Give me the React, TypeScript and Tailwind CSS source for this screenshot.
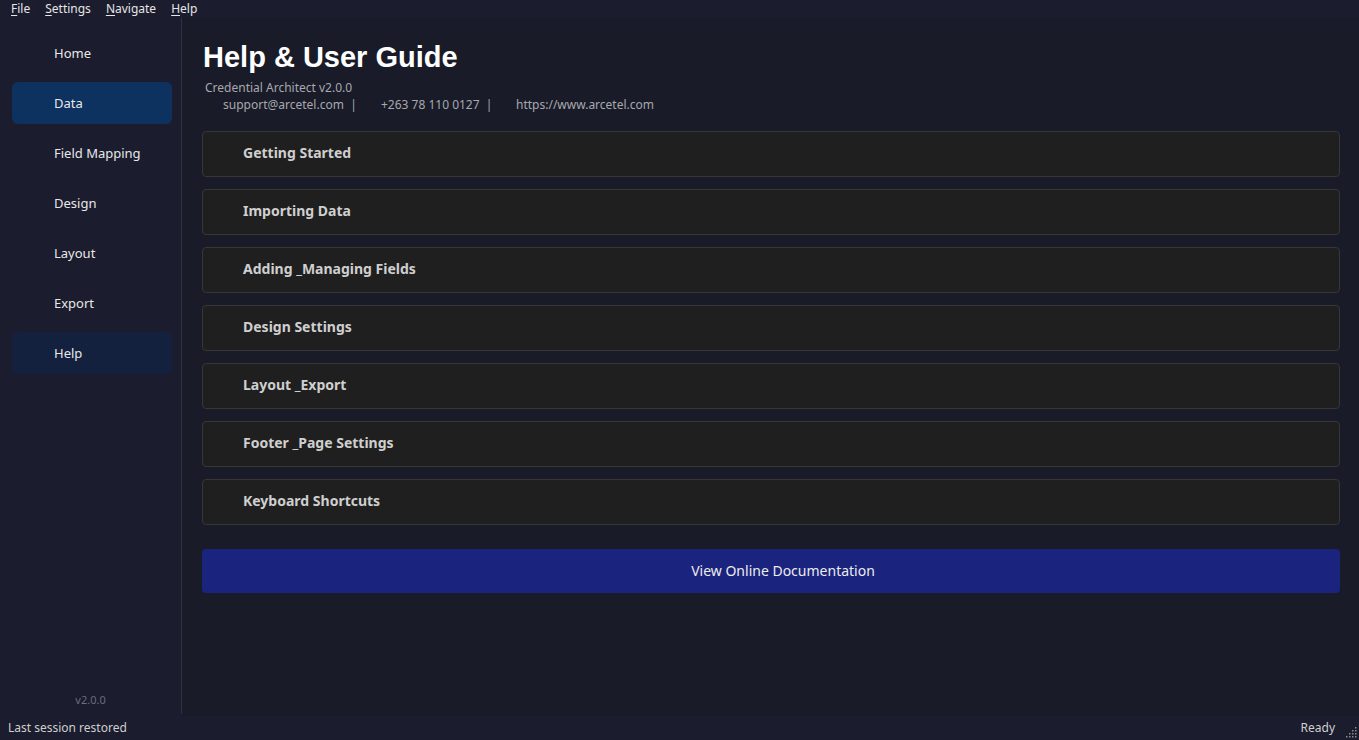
const navItems = ["Home", "Data", "Field Mapping", "Design", "Layout", "Export", "Help"];

const sections = [
  "Getting Started",
  "Importing Data",
  "Adding _Managing Fields",
  "Design Settings",
  "Layout _Export",
  "Footer _Page Settings",
  "Keyboard Shortcuts",
];

const menus = [
  { key: "F", rest: "ile" },
  { key: "S", rest: "ettings" },
  { key: "N", rest: "avigate" },
  { key: "H", rest: "elp" },
];

function App() {
  return (
    <div
      className="w-[1359px] h-[740px] flex flex-col bg-[#1b1c2e] text-[#e0e0e0] overflow-hidden"
      style={{ fontFamily: '"Noto Sans", sans-serif' }}
    >
      {/* menu bar */}
      <div className="h-[18px] flex items-center gap-[15px] pl-[11px] text-[12px] leading-none text-[#e6e6e6]">
        {menus.map((m) => (
          <span key={m.key}>
            <span className="underline underline-offset-2">{m.key}</span>
            {m.rest}
          </span>
        ))}
      </div>

      <div className="flex flex-1 min-h-0">
        {/* sidebar */}
        <aside className="w-[182px] flex flex-col pt-[14px] pb-[6px] border-r border-[#2e3142] mb-[2px]">
          <nav className="flex flex-col gap-[8px] px-[12px]">
            {navItems.map((item) => (
              <div
                key={item}
                className={
                  "h-[42px] w-[160px] rounded-[6px] flex items-center pl-[42px] pt-[1px] text-[13px] text-[#e8e8e8] " +
                  (item === "Data"
                    ? "bg-[#0e3260]"
                    : item === "Help"
                    ? "bg-[#13213f]"
                    : "")
                }
              >
                {item}
              </div>
            ))}
          </nav>
          <div className="mt-auto text-center text-[11px] text-[#6a6d7a]">v2.0.0</div>
        </aside>

        {/* main */}
        <main className="flex-1 bg-[#191c28] pl-[20px] pr-[19px] pt-[21px]">
          <h1
            className="text-[29px] leading-[36px] font-bold text-white pl-[1px]"
            style={{ fontFamily: '"Liberation Sans", Arial, sans-serif' }}
          >
            Help &amp; User Guide
          </h1>
          <div className="text-[12px] leading-[17px] text-[#a8a8ae] pl-[3px] mt-[4px]">
            Credential Architect v2.0.0
          </div>
          <div className="text-[12px] leading-[17px] text-[#a8a8ae] pl-[21px] flex">
            <span className="w-[158px] whitespace-pre">support@arcetel.com  |</span>
            <span className="w-[135px] whitespace-pre">+263 78 110 0127  |</span>
            <span>https://www.arcetel.com</span>
          </div>

          <div className="flex flex-col gap-[12px] mt-[18px]">
            {sections.map((s) => (
              <div
                key={s}
                className="h-[46px] rounded-[4px] border border-[#363636] bg-[#1f1f1f] flex items-center pl-[40px] pb-[3px] text-[14px] font-bold text-[#cfcfcf]"
              >
                {s}
              </div>
            ))}
          </div>

          <button className="mt-[24px] w-full h-[44px] rounded-[4px] bg-[#1a237e] pl-[24px] pb-[2px] text-[14px] text-[#ececec]">
            View Online Documentation
          </button>
        </main>
      </div>

      {/* status bar */}
      <div className="h-[24px] flex items-center justify-between pl-[8px] pr-[2px] pb-[1px] text-[12px] text-[#cfcfcf]">
        <span>Last session restored</span>
        <div className="flex items-center gap-[10px]">
          <span>Ready</span>
          <svg width="12" height="12" viewBox="0 0 12 12" className="mt-[8px]">
            {[
              [10, 2], [10, 5], [7, 5], [10, 8], [7, 8], [4, 8], [10, 11], [7, 11], [4, 11], [1, 11],
            ].map(([x, y], i) => (
              <rect key={i} x={x} y={y - 1} width="1.5" height="1.5" fill="#8a8a8a" />
            ))}
          </svg>
        </div>
      </div>
    </div>
  );
}

export default App;
